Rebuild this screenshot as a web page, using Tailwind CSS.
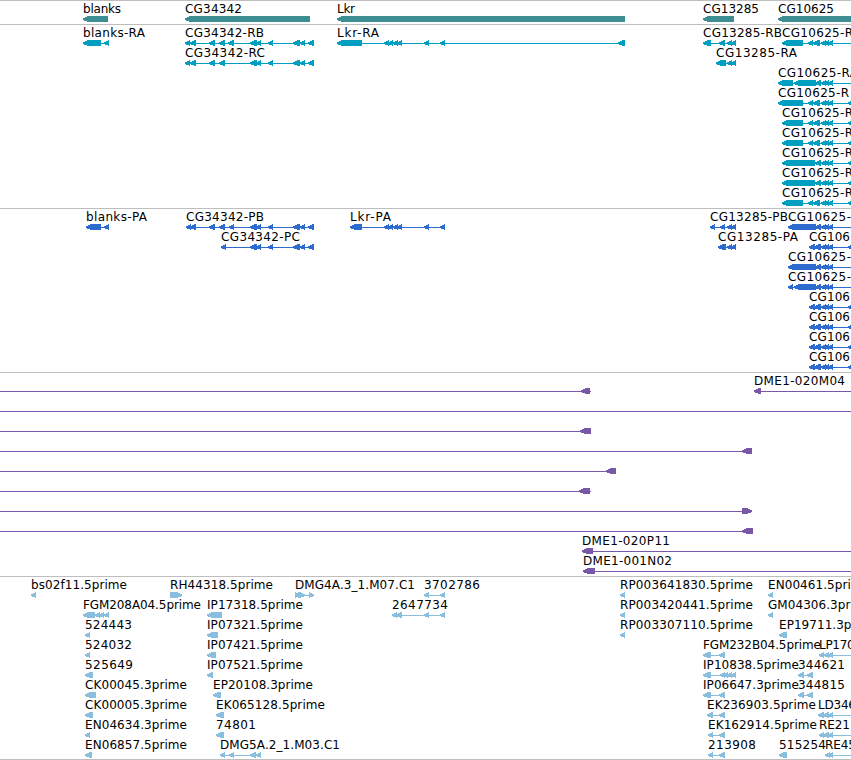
<!DOCTYPE html>
<html lang="en">
<head>
    <meta charset="UTF-8">
    <meta name="viewport" content="width=device-width, initial-scale=1.0">
    <script src="https://cdn.jsdelivr.net/npm/@tailwindcss/browser@4"></script>
    <title>Genome Browser</title>
</head>
<body class="bg-white">
    <main class="flex flex-col w-[851px] h-[760px] overflow-hidden border-b border-[#bebebe]">
        <section class="h-6 shrink-0 border-t border-[#bebebe] text-[#3d8e92]"><svg id="genes" class="block w-full h-full overflow-hidden"></svg></section>
        <section class="h-[184px] shrink-0 border-t border-[#bebebe] text-[#009fc1]"><svg id="transcripts" class="block w-full h-full overflow-hidden"></svg></section>
        <section class="h-[164px] shrink-0 border-t border-[#bebebe] text-[#2e6bce]"><svg id="proteins" class="block w-full h-full overflow-hidden"></svg></section>
        <section class="h-[204px] shrink-0 border-t border-[#bebebe] text-[#7759a8]"><svg id="clones" class="block w-full h-full overflow-hidden"></svg></section>
        <section class="h-[183px] shrink-0 border-t border-[#bebebe] text-[#89bede]"><svg id="ests" class="block w-full h-full overflow-hidden"></svg></section>
    </main>
    <script>
      const END = 851
      // exons shared by several features, as [start, end]
      const rb = [[250,257],[256,261],[268,273],[293,300],[300,305],[308,314]]
      const lkr = [[384,389],[388,393],[393,398],[397,402],[424,429],[440,445]]
      const cg = [[821,826],[824,829],[828,833]]
      const cgA = [[808,813],[813,820], ...cg]
      const cgB = [[815,821], ...cg]
      const edge = [[848,856]]
      const short = [[809,815],[814,821], ...cg, ...edge]

      // row, label, label x, label width, exons, options
      const tracks = {
        genes: [
          [0, 'blanks', 83, 38, [[83,108]]],
          [0, 'CG34342', 185, 57, [[185,310]]],
          [0, 'Lkr', 337, 18, [[337,625]]],
          [0, 'CG13285', 703, 56, [[703,734]]],
          [0, 'CG10625', 778, 56, [[778,870]]],
        ],
        transcripts: [
          [0, 'blanks-RA', 83, 62, [[83,101],[104,109]]],
          [0, 'CG34342-RB', 185, 79, [[185,190],[190,196],[209,215],[219,225],[228,234], ...rb]],
          [1, 'CG34342-RC', 185, 80, [[185,190],[190,196],[209,215],[219,225], ...rb]],
          [0, 'Lkr-RA', 337, 42, [[337,362], ...lkr, [618,625]]],
          [0, 'CG13285-RB', 703, 79, [[703,711],[719,725],[727,732],[731,736]]],
          [1, 'CG13285-RA', 716, 81, [[716,726],[727,732],[731,736]]],
          [0, 'CG10625-R', 782, 71, [[782,803], ...cgA], {to: END}],
          [2, 'CG10625-RA', 778, 80, [[778,793],[794,816], ...cgB], {to: END}],
          [3, 'CG10625-R', 778, 71, [[778,803], ...cgA, ...edge]],
          [4, 'CG10625-R', 782, 71, [[782,803], ...cgA, ...edge]],
          [5, 'CG10625-R', 782, 71, [[782,803], ...cgA, ...edge]],
          [6, 'CG10625-R', 782, 71, [[782,815], ...cgB, ...edge]],
          [7, 'CG10625-R', 782, 71, [[782,815], ...cgB, ...edge]],
          [8, 'CG10625-R', 782, 71, [[782,803], ...cgA, ...edge]],
        ],
        proteins: [
          [0, 'blanks-PA', 86, 61, [[86,101],[104,109]]],
          [0, 'CG34342-PB', 186, 78, [[186,191],[190,196],[209,215],[219,225],[229,234], ...rb]],
          [1, 'CG34342-PC', 221, 79, [[221,226], ...rb]],
          [0, 'Lkr-PA', 350, 41, [[350,362], ...lkr]],
          [0, 'CG13285-PB', 710, 78, [[710,715],[720,725],[727,732],[731,736]]],
          [1, 'CG13285-PA', 718, 80, [[718,726],[727,732],[731,736]]],
          [0, 'CG10625-', 788, 63, [[788,816], ...cgB], {to: END}],
          [1, 'CG106', 809, 41, short],
          [2, 'CG10625-', 788, 63, [[788,816], ...cgB], {to: END}],
          [3, 'CG10625-', 788, 63, [[788,793],[794,816], ...cgB], {to: END}],
          [4, 'CG106', 809, 41, short],
          [5, 'CG106', 809, 41, short],
          [6, 'CG106', 809, 41, short],
          [7, 'CG106', 809, 41, short],
        ],
        clones: [
          [0, '', 0, 0, [[581,590]], {from: 0, to: 591}],
          [0, 'DME1-020M04', 754, 91, [[754,761]], {to: END}],
          [1, '', 0, 0, [], {from: 0, to: END}],
          [2, '', 0, 0, [[580,591]], {from: 0}],
          [3, '', 0, 0, [[742,752]], {from: 0}],
          [4, '', 0, 0, [[606,616]], {from: 0}],
          [5, '', 0, 0, [[579,590]], {from: 0, to: 591}],
          [6, '', 0, 0, [[742,752]], {from: 0, right: true}],
          [7, '', 0, 0, [[742,753]], {from: 0}],
          [8, 'DME1-020P11', 582, 88, [[582,593]], {to: END}],
          [9, 'DME1-001N02', 583, 89, [[583,595]], {to: END}],
        ],
        ests: [
          [0, 'bs02f11.5prime', 31, 96, [[31,36]]],
          [0, 'RH44318.5prime', 170, 103, [[170,182]], {right: true}],
          [0, 'DMG4A.3_1.M07.C1', 295, 120, [[295,300],[298,305],[309,314]], {right: true}],
          [0, '3702786', 424, 56, [[424,429],[440,445]]],
          [0, 'RP003641830.5prime', 620, 133, [[620,625]]],
          [0, 'EN00461.5prime', 768, 102, [[768,773]]],
          [1, 'FGM208A04.5prime', 83, 118, [[83,95],[95,100],[99,104],[104,109]]],
          [1, 'IP17318.5prime', 207, 96, [[207,222]]],
          [1, '2647734', 392, 56, [[392,397],[396,402],[424,429],[440,445]]],
          [1, 'RP003420441.5prime', 620, 133, [[620,625]]],
          [1, 'GM04306.3prime', 768, 105, [[768,773]]],
          [2, '524443', 85, 47, [[85,90]]],
          [2, 'IP07321.5prime', 207, 96, [[207,218]]],
          [2, 'RP003307110.5prime', 620, 133, [[620,625]]],
          [2, 'EP19711.3prime', 779, 100, [[779,787]]],
          [3, '524032', 85, 47, [[85,90]]],
          [3, 'IP07421.5prime', 207, 96, [[207,216]]],
          [3, 'FGM232B04.5prime', 703, 118, [[703,711],[719,725]]],
          [3, 'LP1700', 819, 43, [[819,824],[824,829],[828,833]], {to: END}],
          [4, '525649', 85, 48, [[85,93]]],
          [4, 'IP07521.5prime', 207, 96, [[207,213]]],
          [4, 'IP10838.5prime', 703, 96, [[703,711],[720,725],[723,728],[727,732],[731,736]]],
          [4, '344621', 798, 47, [[798,804],[807,813]]],
          [5, 'CK00045.3prime', 85, 102, [[85,96]]],
          [5, 'EP20108.3prime', 213, 100, [[213,221]]],
          [5, 'IP06647.3prime', 703, 96, [[703,711],[719,725]]],
          [5, '344815', 798, 47, [[798,804],[807,813]]],
          [6, 'CK00005.3prime', 85, 102, [[85,93]]],
          [6, 'EK065128.5prime', 216, 109, [[216,224]]],
          [6, 'EK236903.5prime', 707, 109, [[707,713],[719,725]]],
          [6, 'LD346', 818, 38, [[818,824],[823,829],[828,833]], {to: END}],
          [7, 'EN04634.3prime', 85, 102, [[85,90]]],
          [7, '74801', 216, 40, [[216,224]]],
          [7, 'EK162914.5prime', 708, 109, [[708,713],[719,725]]],
          [7, 'RE21', 819, 31, [[819,824],[823,829],[828,833]], {to: END}],
          [8, 'EN06857.5prime', 85, 102, [[85,92]]],
          [8, 'DMG5A.2_1.M03.C1', 220, 120, [[220,225],[229,234],[250,256],[256,261]]],
          [8, '213908', 708, 48, [[708,713],[719,725]]],
          [8, '515254', 779, 47, [[779,787]]],
          [8, 'RE45', 825, 31, [[825,830],[828,833]], {to: END}],
        ],
      }

      function arrow([a, b], y, right) {
        return right
          ? `<polygon points="${a},${y} ${b - 5},${y} ${b},${y + 2.3} ${b},${y + 4} ${b - 5},${y + 6} ${a},${y + 6}"/>`
          : `<polygon points="${b},${y} ${a + 5},${y} ${a},${y + 2.3} ${a},${y + 4} ${a + 5},${y + 6} ${b},${y + 6}"/>`
      }

      for (const id in tracks) {
        let shapes = ''
        let labels = ''
        for (const [row, name, x, width, exons, opt = {}] of tracks[id]) {
          // the section border takes the first pixel of every track
          const y = row * 20 + 15
          const from = opt.from ?? exons[0][0]
          const to = opt.to ?? exons[exons.length - 1][1]
          shapes += `<rect x="${from}" y="${y + 3}" width="${to - from}" height="1"/>`
          shapes += exons.map(e => arrow(e, y, opt.right)).join('')
          if (name) labels += `<text x="${x}" y="${y - 3}" textLength="${width}" lengthAdjust="spacing">${name}</text>`
        }
        document.getElementById(id).innerHTML = `
          <g fill="currentColor" shape-rendering="crispEdges">${shapes}</g>
          <g class="fill-black font-['DejaVu_Sans',sans-serif] text-[12px]">${labels}</g>
        `
      }
    </script>
</body>
</html>
